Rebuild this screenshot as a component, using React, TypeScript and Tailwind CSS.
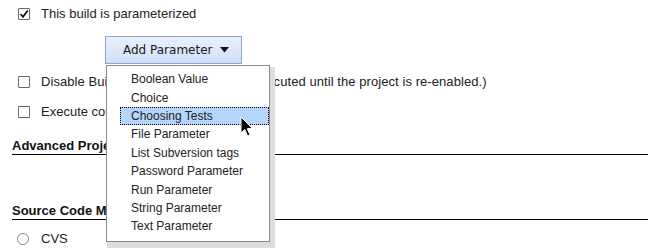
const menuItems = [
  'Boolean Value',
  'Choice',
  'Choosing Tests',
  'File Parameter',
  'List Subversion tags',
  'Password Parameter',
  'Run Parameter',
  'String Parameter',
  'Text Parameter',
];

function CheckBox({ checked }: { checked?: boolean }) {
  return (
    <span className="flex h-[12px] w-[12px] shrink-0 items-center justify-center rounded-[1px] border border-[#6a6a6a] bg-white">
      {checked && (
        <svg width="10" height="10" viewBox="0 0 10 10">
          <path d="M1.5 5 L4 7.8 L8.8 1.6" fill="none" stroke="#111" strokeWidth="1.7" />
        </svg>
      )}
    </span>
  );
}

function Cursor() {
  return (
    <svg className="absolute left-[240px] top-[116px]" width="14" height="22" viewBox="0 0 14 22">
      <path
        d="M1 1 L1 17 L4.8 13.4 L7.6 20 L10 19 L7.3 12.6 L12.5 12.6 Z"
        fill="#000"
        stroke="#fff"
        strokeWidth="1"
        strokeLinejoin="round"
      />
    </svg>
  );
}

export default function App() {
  return (
    <div className="relative h-[251px] w-[648px] overflow-hidden bg-white font-['Liberation_Sans',Arial,sans-serif] text-[13px] text-[#222]">
      {/* parameterized checkbox */}
      <div className="flex h-[25px] items-center gap-[11px] pl-[18px] pt-[2px]">
        <CheckBox checked />
        <span>This build is parameterized</span>
      </div>

      {/* add parameter button */}
      <div className="mt-[11px] pl-[105px]">
        <button className="flex h-[28px] items-center gap-[8px] border border-[#8ea6cf] bg-linear-to-b from-[#e8f0fc] to-[#cfe0f8] pl-[17px] pr-[12px] font-['DejaVu_Sans',sans-serif] text-[12px] text-[#1a1a1a]">
          <span>Add Parameter</span>
          <svg width="9" height="6" viewBox="0 0 9 6">
            <path d="M0 0 H9 L4.5 5.5 Z" fill="#111" />
          </svg>
        </button>
      </div>

      <div className="mt-[3px] flex h-[30px] items-center gap-[11px] pl-[18px]">
        <CheckBox />
        <span className="tracking-[0.07px]">Disable Build (No new builds will be executed until the project is re-enabled.)</span>
      </div>
      <div className="flex h-[29px] items-center gap-[11px] pl-[18px]">
        <CheckBox />
        <span>Execute concurrent builds if necessary</span>
      </div>

      {/* section headings */}
      <div className="ml-[12px] mt-[12px] border-b border-black pb-[1px] text-[13px] font-bold leading-[15px] text-[#111]">
        Advanced Project Options
      </div>
      <div className="ml-[12px] mt-[48px] border-b border-black pb-[1px] text-[13px] font-bold leading-[15px] text-[#111]">
        Source Code Management
      </div>
      <div className="mt-[9px] flex h-[20px] items-center gap-[12px] pl-[17px]">
        <span className="h-[12px] w-[12px] rounded-full border border-[#8a8a8a] bg-white" />
        <span>CVS</span>
      </div>

      {/* dropdown menu */}
      <div className="absolute left-[106px] top-[65px] h-[177px] w-[164px] border border-[#8a8a8a] bg-white pt-[4px] text-[12px] shadow-[3px_4px_0_2px_#dddddd]">
        <ul className="pl-[13px]">
          {menuItems.map((item, i) => (
            <li
              key={item}
              className={
                i === 2
                  ? 'flex h-[18.4px] items-center border border-dotted border-black bg-[#b5d5fd] pl-[10px]'
                  : 'flex h-[18.4px] items-center pl-[11px]'
              }
            >
              {item}
            </li>
          ))}
        </ul>
      </div>

      <Cursor />
    </div>
  );
}
